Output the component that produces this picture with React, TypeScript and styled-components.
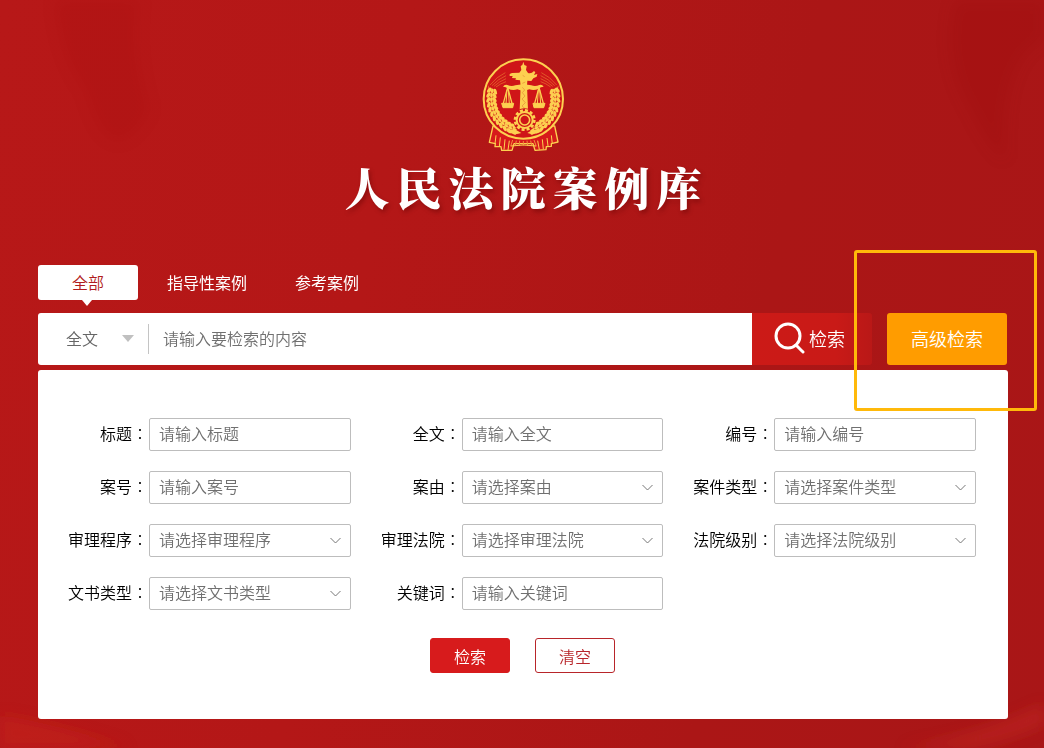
import React, { useState } from "react";
import styled, { createGlobalStyle, css } from "styled-components";

const GlobalStyle = createGlobalStyle`
  * { box-sizing: border-box; }
  body {
    margin: 0;
    background: #b01616;
    font-family: "Noto Sans CJK SC", sans-serif;
    font-size: 16px;
    font-weight: 350;
  }
  button, input, select { font: inherit; }
`;

const Page = styled.div`
  position: relative;
  min-height: 100vh;
  padding: 50px 36px 29px 38px;
  overflow: hidden;
  background: linear-gradient(100deg, #b71818 0%, #b41717 35%, #ab1616 70%, #a91617 100%);
`;

const Backdrop = styled.svg`
  position: absolute;
  inset: 0;
  width: 100%;
  height: 100%;
`;

const Content = styled.div`
  position: relative;
`;

const Hero = styled.header`
  display: flex;
  flex-direction: column;
  align-items: center;
`;

const Title = styled.h1`
  margin: 0 0 48px;
  padding-left: 7px;
  color: #fff;
  font-family: "Noto Serif CJK SC", "Noto Sans CJK SC", serif;
  font-size: 45px;
  font-weight: 900;
  line-height: 60px;
  letter-spacing: 7px;
  text-shadow: 2px 3px 4px rgba(90, 0, 0, 0.4);
`;

const Tabs = styled.nav`
  display: flex;
  margin-bottom: 13px;
`;

const Tab = styled.button<{ $active: boolean }>`
  position: relative;
  height: 35px;
  padding: 0 24px 2px;
  border: 0;
  border-radius: 3px;
  background: transparent;
  color: #fff;
  font-weight: 400;
  cursor: pointer;

  ${({ $active }) =>
    $active &&
    css`
      width: 100px;
      margin-right: 5px;
      background: #fff;
      color: #b01c20;
      font-weight: 350;

      &::after {
        content: "";
        position: absolute;
        top: 100%;
        left: 50%;
        margin-left: -6px;
        border: 5px solid transparent;
        border-top: 6px solid #fff;
        border-bottom: 0;
      }
    `}
`;

const SearchRow = styled.form`
  display: flex;
  height: 52px;
  margin: 0 1px 5px 0;
`;

const SearchBox = styled.div`
  display: flex;
  flex: 1;
  align-items: center;
  min-width: 0;
  border-radius: 3px 0 0 3px;
  background: #fff;
`;

const ScopeWrap = styled.div`
  position: relative;
  flex: none;
  width: 111px;
  border-right: 1px solid #c4c4c4;

  &::after {
    content: "";
    position: absolute;
    top: 11px;
    right: 14px;
    border: 6px solid transparent;
    border-top: 7px solid #c0c0c0;
    border-bottom: 0;
    pointer-events: none;
  }
`;

const Scope = styled.select`
  appearance: none;
  display: block;
  width: 100%;
  height: 30px;
  padding: 0 0 2px 28px;
  border: 0;
  background: transparent;
  color: #666;
  outline: none;
`;

const Keyword = styled.input`
  flex: 1;
  min-width: 0;
  height: 52px;
  padding: 0 14px 2px;
  border: 0;
  background: transparent;
  color: #333;
  outline: none;

  &::placeholder { color: #707070; opacity: 1; }
`;

const SearchButton = styled.button`
  display: flex;
  align-items: center;
  justify-content: center;
  gap: 3px;
  width: 120px;
  padding: 0 5px 2px 0;
  border: 0;
  border-radius: 0 3px 3px 0;
  background: linear-gradient(90deg, #cc1a17 0%, #c91a17 70%, #b91817 100%);
  color: #fff;
  font-size: 18px;
  cursor: pointer;
`;

const AdvancedWrap = styled.div`
  position: relative;
  display: flex;
  margin-left: 15px;
`;

const AdvancedButton = styled.button`
  width: 120px;
  padding: 0 0 2px;
  border: 0;
  border-radius: 3px;
  background: #ff9c00;
  color: #fff;
  font-size: 18px;
  cursor: pointer;
`;

const Highlight = styled.span`
  position: absolute;
  z-index: 2;
  inset: -63px -30px -46px -33px;
  border: 3px solid #ffb90a;
  border-radius: 3px;
  pointer-events: none;
`;

const Panel = styled.form`
  padding: 48px 0 46px;
  border-radius: 3px;
  background: #fff;
`;

const Fields = styled.div`
  display: grid;
  grid-template-columns: repeat(3, 1fr);
  row-gap: 20px;
  padding-right: 32px;
`;

const Field = styled.div`
  display: flex;
  align-items: center;
  height: 33px;
`;

const Label = styled.label`
  flex: none;
  width: 111px;
  padding: 0 1px 4px 0;
  color: #000;
  line-height: 24px;
  text-align: right;
  white-space: nowrap;
`;

const Colon = styled.span`
  font-family: "Noto Sans CJK TC", sans-serif;
  font-weight: 300;
`;

const control = css`
  width: 100%;
  height: 33px;
  padding: 0 9px 4px;
  border: 1px solid #bdbdbd;
  border-radius: 2px;
  background: #fff;
  color: #707070;
  outline: none;
`;

const TextInput = styled.input`
  ${control}
  &::placeholder { color: #707070; opacity: 1; }
`;

const SelectWrap = styled.div`
  position: relative;
  flex: 1;
  min-width: 0;
`;

const Select = styled.select`
  ${control}
  appearance: none;
  display: block;
`;

const Chevron = styled.svg`
  position: absolute;
  top: 13px;
  right: 10px;
  width: 11px;
  height: 7px;
  fill: none;
  stroke: #777;
  pointer-events: none;
`;

const Actions = styled.div`
  display: flex;
  justify-content: center;
  gap: 25px;
  margin-top: 28px;
  padding-right: 1px;
`;

const ActionButton = styled.button<{ $primary?: boolean }>`
  width: 80px;
  height: 35px;
  padding: 0;
  border: 1px solid ${({ $primary }) => ($primary ? "#d71b1c" : "#b8252a")};
  border-radius: 3px;
  background: ${({ $primary }) => ($primary ? "#d71b1c" : "#fff")};
  color: ${({ $primary }) => ($primary ? "#fff" : "#b8252a")};
  cursor: pointer;
`;

const GOLD = "#fdd050";

/* Kernels of one ear of wheat, following the left inner side of the medallion. */
const kernels = Array.from({ length: 12 }, (_, i) => {
  const deg = 194 - i * 8;
  const rad = (deg * Math.PI) / 180;
  return { deg, cos: Math.cos(rad), sin: Math.sin(rad), key: i };
});

function WheatEar() {
  return (
    <g fill={GOLD}>
      {kernels.map(({ deg, cos, sin, key }) => (
        <g key={key}>
          <ellipse cx={160 + 105 * cos} cy={146 + 105 * sin} rx="5" ry="9" transform={`rotate(${deg + 28} ${160 + 105 * cos} ${146 + 105 * sin})`} />
          <ellipse cx={160 + 96 * cos} cy={146 + 96 * sin} rx="4" ry="7" transform={`rotate(${deg} ${160 + 96 * cos} ${146 + 96 * sin})`} />
          <ellipse cx={160 + 87 * cos} cy={146 + 87 * sin} rx="5" ry="9" transform={`rotate(${deg - 32} ${160 + 87 * cos} ${146 + 87 * sin})`} />
        </g>
      ))}
      <path d="M57 128 L55 106 L62 124 Z" />
    </g>
  );
}

function SidePart() {
  return (
    <g>
      <g fill="none" stroke="#e9792f" strokeWidth="2">
        <path d="M60 105 Q80 80 106 68" />
        <path d="M66 107 Q84 87 108 77" />
        <path d="M72 109 Q88 94 108 86" />
        <path d="M78 111 Q92 100 108 95" />
      </g>
      <WheatEar />
      <g stroke={GOLD} fill="none" strokeWidth="3" strokeLinejoin="round">
        <path d="M113 112 L100 160 M113 112 L126 160" strokeWidth="4" />
        <path d="M111 120 L108 162 M115 120 L118 162" strokeWidth="3" />
        <path d="M95 160 H131 L128 173 H99 Z" fill={GOLD} />
      </g>
      <path d="M158 103 L136 106 Q124 110 112 105 Q103 103 99 110 Q108 110 114 116 Q128 123 142 118 L158 123 Z" fill={GOLD} />
    </g>
  );
}

function Emblem() {
  return (
    <svg width="106" height="107" viewBox="0 0 318 321" role="img" aria-label="人民法院徽章">
      <g fill="#d71a1b" stroke={GOLD} strokeWidth="4" strokeLinejoin="round">
        <path d="M69 228 L58 277 L76 281 L75 290 L93 290 L95 301 L126 301 L132 281 L189 281 L195 301 L228 299 L229 290 L244 289 L244 281 L264 276 L254 228 Z" />
        <path d="M78 256 L75 282 M91 262 L88 290 M105 268 L102 299 M118 272 L114 300 M244 256 L247 282 M231 264 L234 288 M217 268 L220 298 M203 272 L208 299" fill="none" strokeWidth="3" />
        <path d="M128 270 L122 289 M139 272 L136 286 M149 272 L148 287 M160 273 V287 M171 272 L173 287 M182 272 L185 286 M192 270 L199 289" fill="none" stroke="#f0913c" strokeWidth="3" />
        <path d="M123 288 Q160 282 198 288" fill="none" strokeWidth="3" />
      </g>
      <circle cx="160" cy="147" r="119" fill="#cf1518" stroke={GOLD} strokeWidth="6" />
      <SidePart />
      <g transform="translate(320 0) scale(-1 1)">
        <SidePart />
      </g>
      <path
        fill={GOLD}
        d="M160 35 L163 45 L170 48 L168 60 L174 69 Q184 72 192 63 L196 67 L192 75 L202 72 L200 80 L190 85 L184 93 L172 92 L171 108 L174 180 L178 192 H144 L149 180 L152 108 L150 91 L136 89 L138 85 L126 84 L128 78 L119 78 L119 72 L126 69 L148 68 L154 60 L152 48 L157 45 Z"
      />
      <path
        d="M158 76 L164 80 M157 100 L166 96 M157 112 L164 120 L157 128 L165 138 L156 147 L166 158 L156 168 L165 176"
        fill="none"
        stroke="#e58a34"
        strokeWidth="2"
      />
      <circle cx="164" cy="210" r="35" fill="#cf1518" />
      <circle cx="164" cy="210" r="29" fill="none" stroke={GOLD} strokeWidth="8" strokeDasharray="9 6.18" />
      <circle cx="164" cy="210" r="24" fill="none" stroke={GOLD} strokeWidth="6" />
      <circle cx="164" cy="210" r="15" fill="none" stroke={GOLD} strokeWidth="5" />
      <path d="M108 243 Q130 232 154 249 Q130 258 108 243 Z M217 243 Q194 232 172 249 Q194 258 217 243 Z" fill={GOLD} />
    </svg>
  );
}

function SearchIcon() {
  return (
    <svg width="32" height="32" viewBox="0 0 32 32" fill="none" stroke="#fff" strokeWidth="3" strokeLinecap="round" aria-hidden="true">
      <circle cx="14" cy="14" r="12" />
      <path d="M22 23 L29 30" />
    </svg>
  );
}

interface FieldSpec {
  id: string;
  label: string;
  select?: boolean;
}

const fields: FieldSpec[] = [
  { id: "title", label: "标题" },
  { id: "fulltext", label: "全文" },
  { id: "serial", label: "编号" },
  { id: "caseno", label: "案号" },
  { id: "cause", label: "案由", select: true },
  { id: "casetype", label: "案件类型", select: true },
  { id: "procedure", label: "审理程序", select: true },
  { id: "court", label: "审理法院", select: true },
  { id: "level", label: "法院级别", select: true },
  { id: "doctype", label: "文书类型", select: true },
  { id: "keywords", label: "关键词" },
];

const tabs = ["全部", "指导性案例", "参考案例"];

const stop = (event: React.FormEvent) => event.preventDefault();

export default function App() {
  const [active, setActive] = useState(0);

  return (
    <>
      <GlobalStyle />
      <Page>
        <Backdrop viewBox="0 0 1044 748" preserveAspectRatio="none" aria-hidden="true">
          <defs>
            <filter id="soft" x="-20%" y="-20%" width="140%" height="140%">
              <feGaussianBlur stdDeviation="7" />
            </filter>
          </defs>
          <g filter="url(#soft)">
            <path d="M55 0 Q60 60 85 90 Q110 180 150 110 Q130 50 140 0 Z" fill="#a01014" opacity="0.12" />
            <path d="M955 0 Q940 60 970 110 Q990 150 1005 160 Q1000 60 1044 40 V0 Z" fill="#8f1014" opacity="0.14" />
            <path d="M0 715 Q60 725 130 748 H0 Z" fill="#d03026" opacity="0.3" />
            <path d="M900 748 Q980 736 1044 704 V724 Q1010 740 970 748 Z" fill="#d83a30" opacity="0.3" />
          </g>
        </Backdrop>
        <Content>
          <Hero>
            <Emblem />
            <Title>人民法院案例库</Title>
          </Hero>

          <Tabs>
            {tabs.map((name, i) => (
              <Tab key={name} type="button" $active={i === active} onClick={() => setActive(i)}>
                {name}
              </Tab>
            ))}
          </Tabs>

          <SearchRow onSubmit={stop}>
            <SearchBox>
              <ScopeWrap>
                <Scope aria-label="检索范围">
                  <option>全文</option>
                </Scope>
              </ScopeWrap>
              <Keyword aria-label="检索内容" placeholder="请输入要检索的内容" />
            </SearchBox>
            <SearchButton type="submit">
              <SearchIcon />
              检索
            </SearchButton>
            <AdvancedWrap>
              <AdvancedButton type="button">高级检索</AdvancedButton>
              <Highlight />
            </AdvancedWrap>
          </SearchRow>

          <Panel onSubmit={stop}>
            <Fields>
              {fields.map(({ id, label, select }) => (
                <Field key={id}>
                  <Label htmlFor={id}>
                    {label}
                    <Colon>：</Colon>
                  </Label>
                  <SelectWrap>
                    {select ? (
                      <>
                        <Select id={id}>
                          <option>{`请选择${label}`}</option>
                        </Select>
                        <Chevron viewBox="0 0 11 7" aria-hidden="true">
                          <path d="M0.5 1 L5.5 6 L10.5 1" />
                        </Chevron>
                      </>
                    ) : (
                      <TextInput id={id} placeholder={`请输入${label}`} />
                    )}
                  </SelectWrap>
                </Field>
              ))}
            </Fields>
            <Actions>
              <ActionButton type="submit" $primary>
                检索
              </ActionButton>
              <ActionButton type="reset">清空</ActionButton>
            </Actions>
          </Panel>
        </Content>
      </Page>
    </>
  );
}
